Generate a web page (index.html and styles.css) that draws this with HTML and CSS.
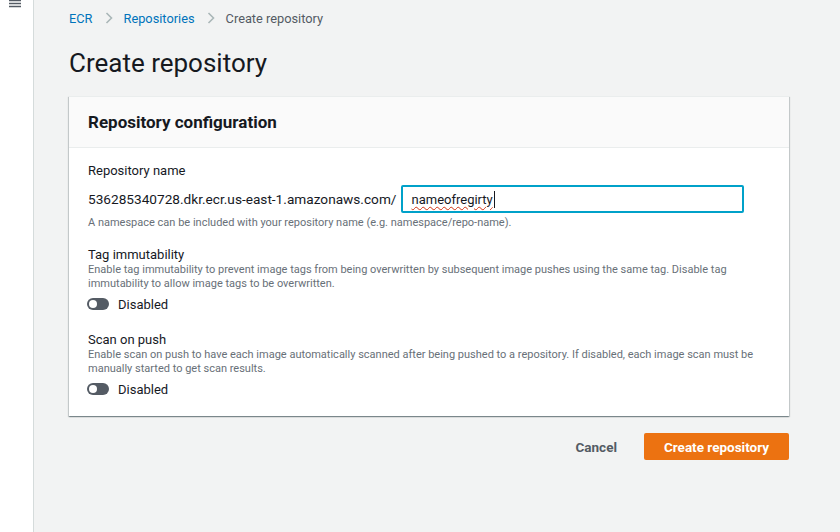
FILE: index.html
```html
<!DOCTYPE html>
<html>
<head>
<meta charset="utf-8">
<link rel="stylesheet" href="styles.css">
</head>
<body>
<div class="app">
  <aside class="sidebar">
    <svg class="menu-icon" width="14" height="10" viewBox="0 0 14 10">
      <path d="M1 0.5H13M1 3.5H13M1 6.5H13" stroke="#545b64" stroke-width="1.6" fill="none"/>
    </svg>
  </aside>
  <main class="main">
    <nav class="crumbs">
      <a class="crumb-link">ECR</a>
      <svg class="chev" width="8" height="12" viewBox="0 0 8 12"><path d="M1.5 1L6.5 6L1.5 11" stroke="#aab7b8" stroke-width="1.6" fill="none"/></svg>
      <a class="crumb-link">Repositories</a>
      <svg class="chev" width="8" height="12" viewBox="0 0 8 12"><path d="M1.5 1L6.5 6L1.5 11" stroke="#aab7b8" stroke-width="1.6" fill="none"/></svg>
      <span class="crumb-current">Create repository</span>
    </nav>
    <h1 class="title">Create repository</h1>
    <section class="panel">
      <header class="panel-head">Repository configuration</header>
      <div class="panel-body">
        <div class="field">
          <div class="label">Repository name</div>
          <div class="name-row">
            <span class="prefix">536285340728.dkr.ecr.us-east-1.amazonaws.com/</span>
            <div class="input"><span class="typed">nameofregirty</span><span class="caret"></span></div>
          </div>
          <div class="hint">A namespace can be included with your repository name (e.g. namespace/repo-name).</div>
        </div>
        <div class="field">
          <div class="label">Tag immutability</div>
          <div class="desc">Enable tag immutability to prevent image tags from being overwritten by subsequent image pushes using the same tag. Disable tag immutability to allow image tags to be overwritten.</div>
          <div class="toggle-row"><span class="toggle"><span class="knob"></span></span><span class="toggle-text">Disabled</span></div>
        </div>
        <div class="field">
          <div class="label">Scan on push</div>
          <div class="desc">Enable scan on push to have each image automatically scanned after being pushed to a repository. If disabled, each image scan must be manually started to get scan results.</div>
          <div class="toggle-row"><span class="toggle"><span class="knob"></span></span><span class="toggle-text">Disabled</span></div>
        </div>
      </div>
    </section>
    <div class="actions">
      <button class="btn-link">Cancel</button>
      <button class="btn-primary">Create repository</button>
    </div>
  </main>
</div>
</body>
</html>
```
FILE: styles.css
```css
* { box-sizing: border-box; }
html, body { margin: 0; height: 100%; }
body {
  font-family: Roboto, "Liberation Sans", sans-serif;
  color: #16191f;
  background: #f2f3f3;
}
.app { display: flex; min-height: 532px; }
.sidebar {
  width: 34px;
  flex: none;
  background: #fff;
  border-right: 1px solid #d5dbdb;
  position: relative;
}
.menu-icon { position: absolute; left: 8px; top: 0; }
.main { flex: 1; padding: 8px 50px 0 35px; }
.crumbs {
  display: flex;
  align-items: center;
  height: 20px;
  font-size: 12.8px;
}
.crumb-link { color: #0073bb; }
.chev { margin: 0 11px 0 12px; }
.crumb-current { color: #545b64; }
.title {
  margin: 19px 0 0 0;
  font-size: 26px;
  font-weight: 400;
  line-height: 32px;
  color: #16191f;
}
.panel {
  margin-top: 17px;
  width: 720px;
  background: #fff;
  box-shadow: 0 1px 1px 0 rgba(0,28,36,0.3), 1px 1px 1px 0 rgba(0,28,36,0.15), -1px 1px 1px 0 rgba(0,28,36,0.15);
  border-top: 1px solid #eaeded;
}
.panel-head {
  background: #fafafa;
  border-bottom: 1px solid #eaeded;
  height: 51px;
  padding: 0 19px;
  display: flex;
  align-items: center;
  font-size: 17px;
  font-weight: 700;
}
.panel-body { padding: 15px 19px 18px 19px; }
.field + .field { margin-top: 17px; }
.field + .field + .field { margin-top: 19px; }
.label { font-size: 13px; line-height: 16px; color: #16191f; }
.name-row {
  display: flex;
  align-items: center;
  margin-top: 6px;
}
.prefix { font-size: 13.65px; color: #16191f; margin-right: 5px; white-space: nowrap; }
.input {
  flex: none;
  width: 343px;
  height: 28px;
  border: 2px solid #00a1c9;
  border-radius: 2px;
  padding: 0 8px;
  display: flex;
  align-items: center;
  font-size: 13px;
}
.typed {
  color: #16191f;
  text-decoration: underline wavy #d13212;
  text-decoration-thickness: 1px;
  text-underline-offset: 2px;
}
.caret { width: 1px; height: 17px; background: #16191f; margin-left: 1px; }
.hint, .desc {
  font-size: 11px;
  line-height: 14px;
  color: #687078;
}
.hint { margin-top: 3px; }
.desc { margin-top: 0; }
.toggle-row {
  display: flex;
  align-items: center;
  margin-top: 4px;
  height: 18px;
}
.toggle {
  width: 22px;
  height: 12px;
  border-radius: 6px;
  background: #545b64;
  position: relative;
  margin-left: -1px;
}
.knob {
  position: absolute;
  left: 2px;
  top: 2px;
  width: 8px;
  height: 8px;
  border-radius: 50%;
  background: #fff;
}
.toggle-text { margin-left: 9px; font-size: 13px; color: #16191f; }
.actions {
  width: 720px;
  display: flex;
  justify-content: flex-end;
  align-items: center;
  margin-top: 17px;
}
.btn-link {
  border: none;
  background: none;
  font-family: inherit;
  font-size: 13.5px;
  font-weight: 700;
  color: #545b64;
  padding: 0;
  margin-right: 27px;
}
.btn-primary {
  border: none;
  background: #ec7211;
  color: #fff;
  font-family: inherit;
  font-size: 13.5px;
  font-weight: 700;
  height: 27px;
  width: 145px;
  border-radius: 2px;
  padding: 0;
}
```
